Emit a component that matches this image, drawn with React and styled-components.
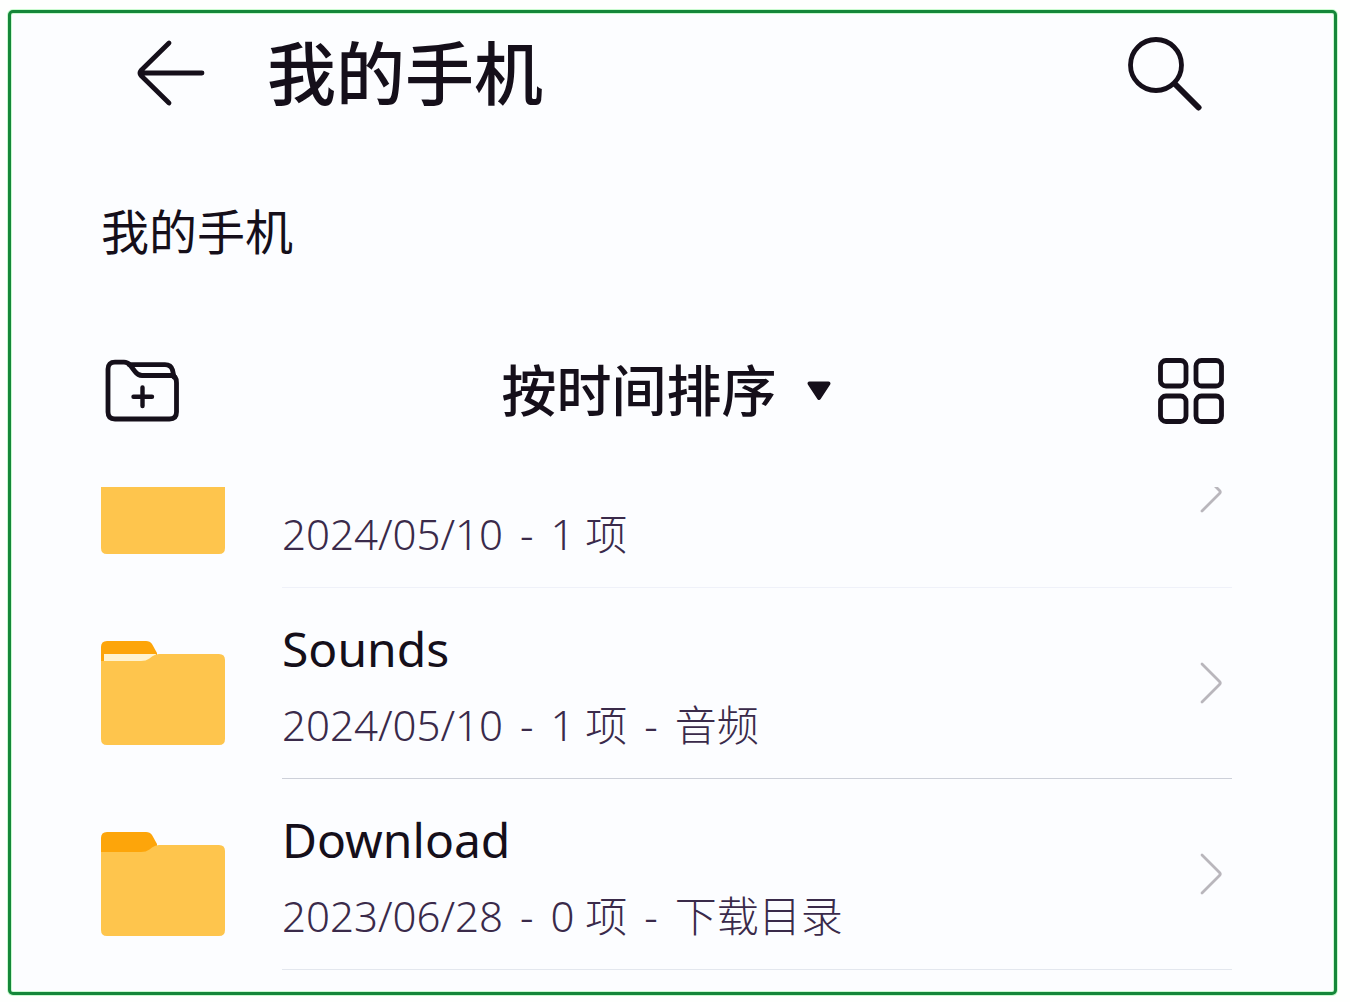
import React, { useState } from "react";
import styled, { createGlobalStyle } from "styled-components";

const files = [
  { id: 1, name: "", meta: ["2024/05/10", "1 项"], icon: "plain", divider: "#eff1f9", clipped: true },
  { id: 2, name: "Sounds", meta: ["2024/05/10", "1 项", "音频"], icon: "paper", divider: "#cdd0d9" },
  { id: 3, name: "Download", meta: ["2023/06/28", "0 项", "下载目录"], icon: "plain", divider: "#e3e7ee" },
];

const BackIcon = () => (
  <svg width="70" height="68" viewBox="0 0 70 68" fill="none" stroke="currentColor" strokeWidth="4.8" strokeLinecap="round" strokeLinejoin="round">
    <path d="M34 4 L6 31.5 Q4 34 6 36.5 L34 64 M6 34 H67" />
  </svg>
);

const SearchIcon = () => (
  <svg width="76" height="76" viewBox="0 0 76 76" fill="none" stroke="currentColor" strokeLinecap="round">
    <circle cx="30" cy="30" r="25.5" strokeWidth="4.8" />
    <path d="M49 49 L72.5 72.5" strokeWidth="6" />
  </svg>
);

const NewFolderIcon = () => (
  <svg width="76" height="64" viewBox="0 0 76 64" fill="none" stroke="currentColor" strokeWidth="4.8" strokeLinecap="round" strokeLinejoin="round">
    <path d="M10 3.2 H19 Q22.5 3.2 25 6 L30 12.5 Q33 16.5 37 16.5 H66 Q71.5 16.5 71.5 24 V53 Q71.5 60 64.5 60 H10 Q3 60 3 53 V10 Q3 3.2 10 3.2 Z" />
    <path d="M24 5.6 H60 Q66 5.6 67.5 11 L69 18" />
    <path d="M37.5 28.5 V47 M28.5 37.8 H47" strokeWidth="4.4" />
  </svg>
);

const GridIcon = () => (
  <svg width="66" height="66" viewBox="0 0 66 66" fill="none" stroke="currentColor" strokeWidth="4.8">
    <rect x="2.5" y="2.5" width="25.5" height="25.5" rx="5.5" />
    <rect x="38" y="2.5" width="25.5" height="25.5" rx="5.5" />
    <rect x="2.5" y="38" width="25.5" height="25.5" rx="5.5" />
    <rect x="38" y="38" width="25.5" height="25.5" rx="5.5" />
  </svg>
);

const ChevronIcon = () => (
  <svg width="24" height="42" viewBox="0 0 24 42" fill="none" stroke="#b9b6bc" strokeWidth="2.8" strokeLinecap="round" strokeLinejoin="round">
    <path d="M3 2 L20.5 19.5 Q22 21 20.5 22.5 L3 40" />
  </svg>
);

const FolderIcon = ({ variant }) => (
  <svg width="124" height="105" viewBox="0 0 124 105">
    <path d="M0 30 V7 Q0 1 6 1 H45 Q49 1 51 4 L56 13 V30 Z" fill="#fda50a" />
    {variant === "paper" && <path d="M3 14 H55 V24 H3 Z" fill="#fff3cf" />}
    <path d="M0 21 H40 Q45 21 48.5 18.5 L51 16.5 Q54 14 58 14 H118 Q124 14 124 20 V99 Q124 105 118 105 H6 Q0 105 0 99 Z" fill="#fec54d" />
  </svg>
);

export default function App() {
  const [order, setOrder] = useState("time");

  return (
    <>
      <GlobalStyle />
      <Screen>
        <Header>
          <IconButton aria-label="返回">
            <BackIcon />
          </IconButton>
          <Title>我的手机</Title>
          <IconButton aria-label="搜索">
            <SearchIcon />
          </IconButton>
        </Header>

        <Breadcrumb aria-label="路径">
          <Crumb href="#">我的手机</Crumb>
        </Breadcrumb>

        <Toolbar>
          <IconButton aria-label="新建文件夹">
            <NewFolderIcon />
          </IconButton>
          <Sort>
            <SortSelect
              aria-label="排序方式"
              value={order}
              onChange={(e) => setOrder(e.target.value)}
            >
              <option value="time">按时间排序</option>
            </SortSelect>
            <SortArrow width="26" height="20" viewBox="0 0 26 20">
              <path d="M3.5 2.5 H22.5 L13 17 Z" fill="currentColor" stroke="currentColor" strokeWidth="4" strokeLinejoin="round" />
            </SortArrow>
          </Sort>
          <IconButton aria-label="网格视图">
            <GridIcon />
          </IconButton>
        </Toolbar>

        <List>
          {files.map((file) => (
            <Item key={file.id} $clipped={file.clipped}>
              <Row href="#">
                <FolderIcon variant={file.icon} />
                <Content $divider={file.divider}>
                  <Info>
                    <Name>{file.name}</Name>
                    <Meta>
                      {file.meta.map((part, index) => (
                        <React.Fragment key={part}>
                          {index > 0 && <Dash> - </Dash>}
                          {part}
                        </React.Fragment>
                      ))}
                    </Meta>
                  </Info>
                  <ChevronIcon />
                </Content>
              </Row>
            </Item>
          ))}
        </List>
      </Screen>
    </>
  );
}

const GlobalStyle = createGlobalStyle`
  * {
    box-sizing: border-box;
  }

  body {
    margin: 0;
    background: #fefffe;
    color: #150f1a;
    font-family: "Noto Sans", "Noto Sans CJK SC", sans-serif;
  }

  #root {
    display: flex;
    min-height: 100vh;
    padding: 10px 13px 7px 8px;
  }

  svg {
    display: block;
    flex-shrink: 0;
  }
`;

const Screen = styled.main`
  flex: 1;
  min-width: 0;
  background: #fcfdff;
  border: 3px solid #15873a;
  border-radius: 5px;
  box-shadow: 0 0 0 1px #c9fbcf, inset 0 0 0 1px #c9fbcf;
`;

const Header = styled.header`
  display: flex;
  align-items: center;
  height: 120px;
  padding: 0 132px 0 124px;
`;

const IconButton = styled.button`
  padding: 0;
  border: none;
  background: none;
  color: inherit;
  cursor: pointer;
`;

const Title = styled.h1`
  flex: 1;
  margin: 0 0 0 62px;
  padding-bottom: 6px;
  font-family: "Noto Sans CJK SC", sans-serif;
  font-size: 69px;
  font-weight: 500;
  line-height: 96px;
`;

const Breadcrumb = styled.nav`
  display: flex;
  align-items: center;
  height: 198px;
  padding: 0 90px 6px;
`;

const Crumb = styled.a`
  color: inherit;
  font-family: "Noto Sans CJK SC", sans-serif;
  font-size: 48px;
  line-height: 64px;
  text-decoration: none;
`;

const Toolbar = styled.div`
  display: flex;
  align-items: center;
  justify-content: space-between;
  height: 120px;
  margin-bottom: 36px;
  padding: 0 110px 0 94px;
`;

const Sort = styled.label`
  display: grid;
  align-items: center;
  margin-right: 6px;
`;

const SortSelect = styled.select`
  grid-area: 1 / 1;
  appearance: none;
  padding: 0 54px 8px 0;
  border: none;
  background: none;
  color: inherit;
  font-family: "Noto Sans CJK SC", sans-serif;
  font-size: 55px;
  font-weight: 500;
  line-height: 80px;
  cursor: pointer;
`;

const SortArrow = styled.svg`
  grid-area: 1 / 1;
  justify-self: end;
  pointer-events: none;
`;

const List = styled.ul`
  margin: 0;
  padding: 0 102px 0 90px;
  list-style: none;
`;

const Item = styled.li`
  display: flex;
  flex-direction: column;
  justify-content: flex-end;
  height: ${({ $clipped }) => ($clipped ? "101px" : "191px")};
  overflow: hidden;
`;

const Row = styled.a`
  display: flex;
  flex-shrink: 0;
  align-items: flex-end;
  gap: 57px;
  height: 191px;
  color: inherit;
  text-decoration: none;

  > svg {
    margin-bottom: 34px;
  }
`;

const Content = styled.div`
  display: flex;
  flex: 1;
  align-items: center;
  height: 100%;
  padding-right: 9px;
  border-bottom: 1px solid ${({ $divider }) => $divider};
`;

const Info = styled.div`
  flex: 1;
  padding-top: 4px;
`;

const Name = styled.div`
  height: 64px;
  font-size: 48px;
  line-height: 64px;
`;

const Meta = styled.div`
  margin-top: 16px;
  color: #3a2a4a;
  font-size: 42px;
  font-weight: 300;
  line-height: 56px;
`;

const Dash = styled.span`
  margin: 0 6px;
  white-space: pre;
`;
